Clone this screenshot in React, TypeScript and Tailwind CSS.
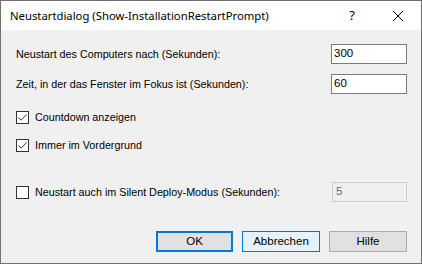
import React from "react";

function Check() {
  return (
    <svg width="11" height="11" viewBox="0 0 11 11" className="block">
      <path d="M1.5 5.5 L4.2 8.2 L9.5 2.5" fill="none" stroke="#333" strokeWidth="1" />
    </svg>
  );
}

function CheckBox({ checked, label }: { checked: boolean; label: string }) {
  return (
    <div className="flex items-center h-[14px]">
      <div className="w-[13px] h-[13px] border border-[#333333] bg-white flex items-center justify-center">
        {checked && <Check />}
      </div>
      <span className="ml-[6px]">{label}</span>
    </div>
  );
}

export default function App() {
  return (
    <div
      className="w-[422px] h-[264px] border border-[#707070] flex flex-col bg-[#f0f0f0] text-black"
      style={{ boxSizing: "border-box" }}
    >
      <div className="h-[29px] bg-white flex items-center pl-[9px] text-[11.3px] font-['Noto_Sans',sans-serif] shrink-0">
        <span className="flex-1 pt-[1px]">Neustartdialog (Show-InstallationRestartPrompt)</span>
        <span className="w-[46px] text-center text-[13px]">?</span>
        <span className="w-[46px] flex justify-center">
          <svg width="10" height="10" viewBox="0 0 10 10">
            <path d="M0 0 L10 10 M10 0 L0 10" stroke="#000" strokeWidth="1" />
          </svg>
        </span>
      </div>
      <div className="flex-1 flex flex-col pl-[15px] pr-[14px] pt-[14px] text-[10.75px] font-['Liberation_Sans',Arial,sans-serif]">
        <div className="flex items-center justify-between h-[20px]">
          <span>Neustart des Computers nach (Sekunden):</span>
          <div className="w-[76px] h-[20px] border border-[#7a7a7a] bg-white pl-[2px] flex items-center text-[11.5px]">300</div>
        </div>
        <div className="flex items-center justify-between h-[20px] mt-[10px]">
          <span>Zeit, in der das Fenster im Fokus ist (Sekunden):</span>
          <div className="w-[76px] h-[20px] border border-[#7a7a7a] bg-white pl-[2px] flex items-center text-[11.5px]">60</div>
        </div>
        <div className="mt-[16px]">
          <CheckBox checked label="Countdown anzeigen" />
        </div>
        <div className="mt-[14px]">
          <CheckBox checked label="Immer im Vordergrund" />
        </div>
        <div className="flex items-center justify-between h-[20px] mt-[30px]">
          <CheckBox checked={false} label="Neustart auch im Silent Deploy-Modus (Sekunden):" />
          <div className="w-[75px] h-[20px] border border-[#cccccc] bg-[#f0f0f0] pl-[3px] flex items-center text-[11.5px] text-[#6d6d6d]">5</div>
        </div>
        <div className="flex justify-end gap-[9px] mt-[29px] text-[11.5px]">
          <div className="w-[77px] h-[21px] border-2 border-[#0078d7] bg-[#e1e1e1] flex items-center justify-center">OK</div>
          <div className="w-[78px] h-[21px] border border-[#0078d7] bg-[#e5f1fb] flex items-center justify-center">Abbrechen</div>
          <div className="w-[78px] h-[21px] border border-[#adadad] bg-[#e1e1e1] flex items-center justify-center">Hilfe</div>
        </div>
      </div>
    </div>
  );
}
